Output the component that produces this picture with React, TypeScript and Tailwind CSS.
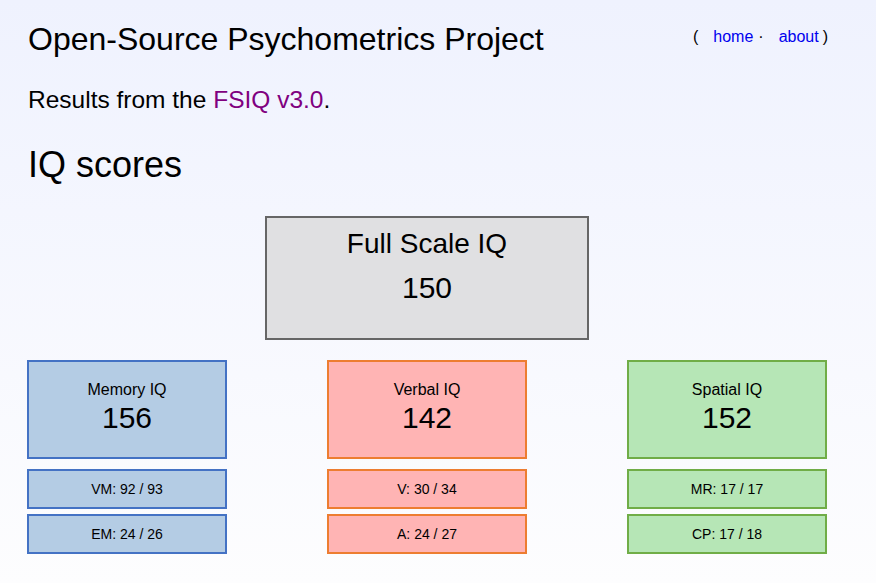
const groups = [
  {
    name: "Memory IQ",
    score: 156,
    box: "bg-[#b4cce4] border-[#4472c4]",
    parts: ["VM: 92 / 93", "EM: 24 / 26"],
  },
  {
    name: "Verbal IQ",
    score: 142,
    box: "bg-[#ffb4b4] border-[#ed7d31]",
    parts: ["V: 30 / 34", "A: 24 / 27"],
  },
  {
    name: "Spatial IQ",
    score: 152,
    box: "bg-[#b6e6b6] border-[#70ad47]",
    parts: ["MR: 17 / 17", "CP: 17 / 18"],
  },
];

export default function App() {
  return (
    <div className="min-h-screen bg-linear-to-b from-[#eff2fe] to-[#fdfdfe] text-black font-['Liberation_Sans',Arial,sans-serif]">
      <div className="pl-[28px] pr-[48px] pt-[20px]">
        <div className="flex items-center justify-between">
          <h1 className="text-[32px] leading-[38px]">Open-Source Psychometrics Project</h1>
          <div className="text-[16px] leading-[20px] mb-[4px]">
            <span>(</span>
            <a href="#" className="ml-[15px] text-[#0000ee]">home</a>
            <span className="ml-[5px]">·</span>
            <a href="#" className="ml-[15px] text-[#0000ee]">about</a>
            <span className="ml-[4px]">)</span>
          </div>
        </div>

        <p className="mt-[28px] text-[24.5px] leading-[28px]">
          Results from the <a href="#" className="text-[#800080]">FSIQ v3.0</a>.
        </p>

        <h2 className="mt-[30px] text-[36px] leading-[42px]">IQ scores</h2>
      </div>

      <div className="ml-[27px] w-[800px] mt-[30px] pb-[30px]">
        <div className="mx-auto w-[324px] h-[124px] border-2 border-[#666666] bg-[#e0e0e2] flex flex-col items-center pt-[10px]">
          <div className="text-[28px] leading-[32px]">Full Scale IQ</div>
          <div className="mt-[10px] text-[30px] leading-[36px]">150</div>
        </div>

        <div className="mt-[20px] flex justify-between">
          {groups.map((g) => (
            <div key={g.name} className="w-[200px]">
              <div className={`h-[99px] border-2 ${g.box} flex flex-col items-center pt-[18px]`}>
                <div className="text-[16px] leading-[20px]">{g.name}</div>
                <div className="text-[30px] leading-[36px]">{g.score}</div>
              </div>
              {g.parts.map((p, i) => (
                <div
                  key={p}
                  className={`${i === 0 ? "mt-[10px]" : "mt-[5px]"} h-[40px] border-2 ${g.box} flex items-center justify-center text-[14px]`}
                >
                  {p}
                </div>
              ))}
            </div>
          ))}
        </div>
      </div>
    </div>
  );
}
